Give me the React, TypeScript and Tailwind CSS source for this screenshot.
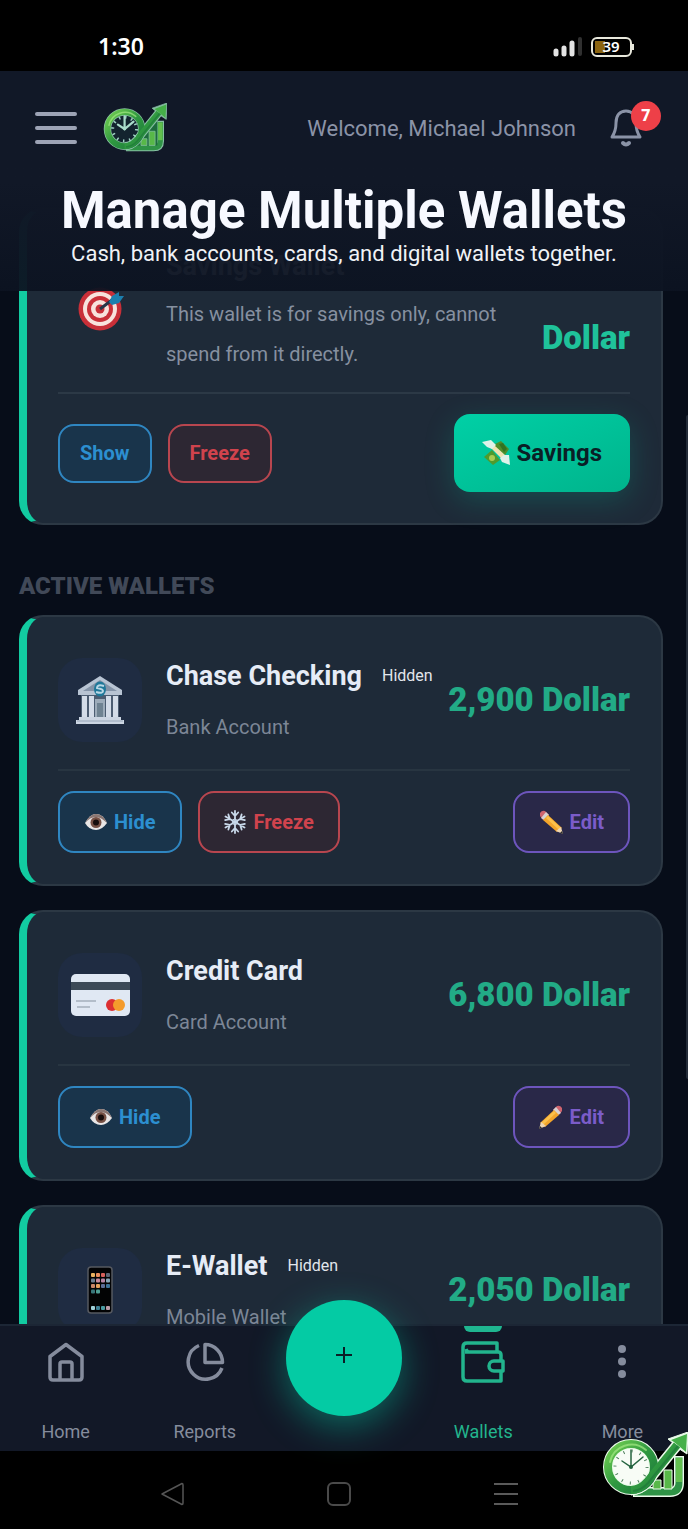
import type { ReactNode } from 'react';
import { clsx } from 'clsx';

type LogoProps = { id: string; className: string; dark?: boolean };

const Logo = ({ id, className, dark }: LogoProps) => {
  const outline = dark ? '#86bfa2' : '#eafbe9';
  return (
    <svg viewBox="0 0 86 66" className={className} aria-hidden="true">
      <defs>
        <linearGradient id={id} x1="0" y1="0" x2="1" y2="1">
          <stop offset="0" stopColor="#74d052" />
          <stop offset="0.5" stopColor="#2f9840" />
          <stop offset="1" stopColor="#1c7a3c" />
        </linearGradient>
      </defs>
      <path d="M36 60H68Q77 60 77 51V29" fill="none" stroke={outline} strokeWidth="10" strokeLinecap="square" strokeLinejoin="round" />
      <path d="M36 60H68Q77 60 77 51V29" fill="none" stroke="#2f9346" strokeWidth="7" strokeLinecap="square" />
      <path d="M77 50V26" stroke="#62bf4e" strokeWidth="6" />
      {dark && <path d="M44 57L73 24V57Z" fill="#1d6b3d" />}
      <path d="M51 57V48h8v9zM62 57V38h8v19z" fill="#58b848" stroke={outline} strokeWidth="1" />
      <circle cx="29" cy="35" r="23" fill={dark ? '#13242f' : '#f8fcf6'} stroke={outline} strokeWidth="10" />
      <path d="M29 58Q38 58 45 50L75 13" fill="none" stroke={outline} strokeWidth="11" />
      <path d="M66 7L86 0L85 22L79 18L71 11Z" fill={outline} stroke={outline} strokeWidth="1" strokeLinejoin="round" />
      <circle cx="29" cy="35" r="23" fill="none" stroke={`url(#${id})`} strokeWidth="8" />
      <path d="M29 58Q38 58 45 50L75 13" fill="none" stroke={`url(#${id})`} strokeWidth="8" />
      <path d="M69 8L85 2L84 20L78 15L72 10Z" fill="#45b048" />
      <path d="M31 59Q40 58 46 51L76 14" fill="none" stroke="#1c7438" strokeWidth="2" opacity="0.6" />
      <path d="M8 30A22 22 0 0 1 44 18" fill="none" stroke="#a4ea84" strokeWidth="2" strokeLinecap="round" opacity="0.7" />
      <circle cx="29" cy="35" r="16" fill="none" stroke={dark ? '#9fd3c4' : '#4d7d5c'} strokeWidth={dark ? 4 : 3} strokeDasharray={dark ? '2 6.4' : '1 7.4'} />
      <path d="M20 29L29 35L41 25M29 35V18" fill="none" stroke={dark ? '#a9dccb' : '#24633f'} strokeWidth={dark ? 3 : 1.5} strokeLinecap="round" />
      <circle cx="29" cy="35" r="2" fill={dark ? '#a9dccb' : '#24633f'} />
    </svg>
  );
};

const TargetIcon = () => (
  <svg viewBox="0 0 48 48" className="size-12" aria-hidden="true">
    <circle cx="24" cy="25" r="21.5" fill="#c92f38" />
    <circle cx="24" cy="25" r="17" fill="#f8e2dc" />
    <circle cx="24" cy="25" r="13" fill="#c92f38" />
    <circle cx="24" cy="25" r="9" fill="#f8e2dc" />
    <circle cx="24" cy="25" r="4.5" fill="#c92f38" />
    <path d="M24 25L36 16" stroke="#26364a" strokeWidth="3" />
    <path d="M33 18L36 12L43 8L43 12L48 12L43 19L36 21Z" fill="#1c7fae" />
  </svg>
);

const BankIcon = () => (
  <svg viewBox="0 0 48 48" className="size-12" aria-hidden="true">
    <path d="M24 0L46 14V19H2V14Z" fill="#b8c4d3" />
    <path d="M24 4L41 15H7Z" fill="#8494a8" />
    <path d="M5 19H43V42H5Z" fill="#4c5d72" />
    <path d="M6 20h5v22H6zM13 20h5v22h-5zM30 20h5v22h-5zM37 20h5v22h-5z" fill="#d3dce8" />
    <path d="M19 23h10v19h-10z" fill="#9dacba" />
    <path d="M21 27h6v15h-6z" fill="#6f8392" />
    <path d="M3 41H45V44H48V48H0V44H3Z" fill="#cbd5e2" />
    <path d="M1 45H47" stroke="#98a6b8" strokeWidth="1" />
    <ellipse cx="24" cy="13" rx="6" ry="7.5" fill="#1f7899" />
    <path d="M28 10Q21 8 21 12Q27 13 27 15Q27 18 20 16" fill="none" stroke="#b9d8e6" strokeWidth="2" />
  </svg>
);

const CardIcon = () => (
  <svg viewBox="0 0 60 44" className="w-15" aria-hidden="true">
    <rect x="1" y="1" width="59" height="42" rx="5" fill="#e0e8f3" />
    <path d="M1 9H60V17H1Z" fill="#3d4a57" />
    <path d="M6 28H26M7 34H20" stroke="#b3bdc9" strokeWidth="2" />
    <circle cx="42" cy="32" r="6" fill="#dc2f32" />
    <circle cx="49" cy="32" r="6" fill="#f49b2c" />
  </svg>
);

const appRows = [
  ['#e9b15f', '#e98d5c', '#d55f5a', '#5b6675'],
  ['#6b7c8f', '#c78a9c', '#b685a5', '#88a7b8'],
  ['#c98667', '#e5a05c', '#5c6d97', '#3b7299'],
  ['#39777a', '#4f9f95'],
];

const PhoneIcon = () => (
  <svg viewBox="0 0 26 48" className="h-12" aria-hidden="true">
    <rect x="1" y="1" width="24" height="46" rx="3" fill="#020304" stroke="#565960" strokeWidth="1.5" />
    {appRows.map((row, y) =>
      row.map((color, x) => <rect key={`${x}-${y}`} x={4 + x * 5} y={7 + y * 5.5} width="4" height="4" rx="1" fill={color} />)
    )}
    {['#9fd0d8', '#3c7f93', '#4a9aa0', '#b99ca7'].map((color, x) => (
      <rect key={x} x={4 + x * 5} y="40" width="4" height="4" rx="1" fill={color} />
    ))}
  </svg>
);

const EyeIcon = () => (
  <svg viewBox="0 0 22 22" className="size-[22px]" aria-hidden="true">
    <path d="M0 12Q5 3 11 3Q18 3 22 12Q17 19 11 19Q4 19 0 12Z" fill="#e9e6e6" />
    <path d="M0 12Q5 3 11 3Q18 3 22 12Q16 6 11 6Q5 6 0 12Z" fill="#8a7672" />
    <circle cx="11" cy="11.5" r="5.5" fill="#765044" />
    <circle cx="11" cy="11.5" r="3" fill="#170d0c" />
  </svg>
);

const SnowIcon = () => (
  <svg viewBox="0 0 22 24" className="w-[22px]" fill="none" stroke="#c9d9ea" strokeWidth="1.8" strokeLinecap="round" aria-hidden="true">
    {[0, 60, 120, 180, 240, 300].map((angle) => (
      <path key={angle} d="M11 12V1M7.8 2.5L11 6L14.2 2.5" transform={`rotate(${angle} 11 12)`} />
    ))}
    <path d="M11 9L13.6 10.500V13.500L11 15L8.400 13.500V10.500Z" strokeWidth="1" />
  </svg>
);

const PencilIcon = ({ flip }: { flip?: boolean }) => (
  <svg viewBox="0 0 24 24" className={clsx('size-6', flip && '-scale-x-100')} aria-hidden="true">
    <path d="M1 3Q3 0 6 1L10 5L4 10L1 6Z" fill="#cf646e" />
    <path d="M7 2L10 5L5 10L2 8Z" fill="#d8d2d2" />
    <path d="M9 5L23 18L18 22L4 10Z" fill="#f3a52b" />
    <path d="M9 6L22 18L20 20L7 8Z" fill="#fbc14c" />
    <path d="M22 17L24 24L17 21Z" fill="#eed6b4" />
    <path d="M23 21L24 24L21 23Z" fill="#2b2b2b" />
  </svg>
);

const MoneyIcon = () => (
  <svg viewBox="0 0 28 26" className="w-7" aria-hidden="true">
    <path d="M11 5L19 1L27 9L23 15Z" fill="#4f8d2a" />
    <path d="M2 17L10 10L18 20L11 25Z" fill="#4f9a2d" />
    <circle cx="10" cy="18" r="3" fill="#a9cc52" />
    <path d="M17 4L21 3L25 9L22 12Z" fill="#327322" />
    <path d="M8 7L12 5L24 16L21 20Z" fill="#f1e2b0" />
    <path d="M0 2L9 0L14 5L10 9L5 7Z" fill="#dff2e9" />
    <path d="M27 15L28 25L20 22L18 18L22 15Z" fill="#dff2e9" />
  </svg>
);

const tones = {
  blue: 'border-[#2f86c1] bg-[#19344b] text-[#2c8fd0]',
  red: 'border-[#b8464f] bg-[#2d2733] text-[#d0434d]',
  purple: 'border-[#6d55bd] bg-[#292848] text-[#7b5cc9]',
};

type ActionProps = { tone: keyof typeof tones; size: string; icon?: ReactNode; children: ReactNode };

const ActionButton = ({ tone, size, icon, children }: ActionProps) => (
  <button type="button" className={clsx('flex items-center justify-center gap-[7px] rounded-2xl border-2 text-xl font-bold', tones[tone], size)}>
    {icon}
    {children}
  </button>
);

type WalletCardProps = {
  icon: ReactNode;
  name: string;
  description: string;
  amount: string;
  hidden?: boolean;
  children: ReactNode;
};

const cardClass =
  'shrink-0 rounded-3xl border-2 border-l-8 border-[#2c3844] border-l-[#12cba1] bg-[#1e2a38] px-[31px] pb-[31px]';

const WalletCard = ({ icon, name, description, amount, hidden, children }: WalletCardProps) => (
  <article className={clsx(cardClass, 'pt-8')}>
    <div className="flex items-center border-b-2 border-[#283541] pb-[18px]">
      <div className="mr-6 flex size-[84px] items-center justify-center rounded-3xl bg-[#1f2c42]">{icon}</div>
      <div>
        <div className="flex items-center gap-5">
          <h3 className="text-[27px] leading-[54px] font-bold text-[#e6ecf6]">{name}</h3>
          {hidden && <span className="text-base text-[#e2e6ec]">Hidden</span>}
        </div>
        <p className="text-xl leading-[48px] text-[#7c8696]">{description}</p>
      </div>
      <p className="ml-auto text-[33px] font-black text-[#22ab86]">{amount}</p>
    </div>
    <div className="flex gap-4 pt-5">{children}</div>
  </article>
);

const StatusBar = () => (
  <div className="flex h-[71px] shrink-0 items-center bg-black pt-[22px] pr-[53px] pl-[98px]">
    <span className="font-['Noto_Sans'] text-[23px] font-semibold text-white">1:30</span>
    <svg viewBox="0 0 82 22" className="ml-auto w-[82px]" aria-hidden="true">
      <path d="M3 18V15M11 18V12M19 18V7" stroke="#e4e4e4" strokeWidth="5" strokeLinecap="round" />
      <path d="M27 18V3" stroke="#303030" strokeWidth="4" strokeLinecap="round" />
      <rect x="39" y="2" width="39" height="18" rx="5" fill="none" stroke="#e8e8dc" strokeWidth="2" />
      <path d="M42 5H52V17H42Z" fill="#8b6410" />
      <path d="M80 8V14" stroke="#e8e8dc" strokeWidth="2" />
      <text x="58" y="16" textAnchor="middle" fill="#fff" fontSize="15" fontWeight="600" fontFamily="Noto Sans">39</text>
    </svg>
  </div>
);

const Header = () => (
  <header className="relative z-10 shrink-0 bg-linear-to-b from-[#111827] from-50% to-[#0c1321]/95 pb-5">
    <div className="flex h-[114px] items-center pr-[27px] pl-[35px]">
      <button type="button" aria-label="Menu" className="flex w-[42px] flex-col gap-[10px]">
        <span className="h-1 rounded-full bg-[#9da3b5]" />
        <span className="h-1 rounded-full bg-[#9da3b5]" />
        <span className="h-1 rounded-full bg-[#9da3b5]" />
      </button>
      <Logo id="logo-header" dark className="ml-[26px] w-16" />
      <span className="ml-auto text-[22px] text-[#8b93a7]">Welcome, Michael Johnson</span>
      <button type="button" aria-label="Notifications" className="relative ml-[34px] pr-[19px]">
        <svg viewBox="0 0 32 38" className="w-8" fill="none" stroke="#8b93a7" strokeWidth="3" strokeLinejoin="round" strokeLinecap="round" aria-hidden="true">
          <path d="M2 28Q6 22 6 14C6 6 10 2 16 2S26 6 26 14Q26 22 30 28Z" />
          <path d="M13 34Q16 37 19 34" strokeWidth="4" />
        </svg>
        <span className="absolute -top-[8px] right-0 flex size-[30px] items-center justify-center rounded-full bg-[#ee4048] text-base font-black text-white">7</span>
      </button>
    </div>
    <h1 className="text-center text-[51px] leading-[52px] font-bold text-[#f7f9ff]">Manage Multiple Wallets</h1>
    <p className="text-center text-[22px] leading-[34px] text-[#f0f2f6]">Cash, bank accounts, cards, and digital wallets together.</p>
  </header>
);

const navLink = 'relative flex flex-col items-center justify-between pt-4 pb-[5px] text-lg';

const BottomNav = () => (
  <nav className="relative z-10 h-[127px] shrink-0 border-t-2 border-[#1c2635] bg-[#121827] text-[#858c9d]">
    <div className="-mx-1 grid h-full grid-cols-5">
      <a href="#home" className={navLink}>
        <svg viewBox="0 0 40 40" className="size-10" fill="none" stroke="currentColor" strokeWidth="3.5" strokeLinejoin="round" aria-hidden="true">
          <path d="M20 2.5L4 14.5V35Q4 38 7 38H33Q36 38 36 35V14.5Z" />
          <path d="M14 38V22Q14 20 16 20H24Q26 20 26 22V38" />
        </svg>
        Home
      </a>
      <a href="#reports" className={navLink}>
        <svg viewBox="0 0 40 40" className="size-10" fill="none" stroke="currentColor" strokeWidth="3.5" aria-hidden="true">
          <path d="M14 3.5A17.5 17.5 0 1 0 37 26" />
          <path d="M20 2.5V20.5H37.5C37.5 11 30 2.5 20 2.5Z" strokeLinejoin="round" />
        </svg>
        Reports
      </a>
      <div className="flex items-start justify-center">
        <button type="button" aria-label="Add" className="-mt-[26px] flex size-[116px] shrink-0 items-center justify-center rounded-full bg-[#04cba4] shadow-[0_10px_36px_rgba(4,203,164,0.45)]">
          <svg viewBox="0 0 18 18" className="-mt-[6px] w-[18px]" stroke="#0b1e26" strokeWidth="2" aria-hidden="true">
            <path d="M9 1V17M1 9H17" />
          </svg>
        </button>
      </div>
      <a href="#wallets" aria-current="page" className={clsx(navLink, 'text-[#22b48d]')}>
        <span className="absolute top-0 h-[6px] w-[38px] rounded-b-md bg-[#1fb690]" />
        <svg viewBox="0 0 44 42" className="-my-px h-[42px] w-11" fill="none" stroke="currentColor" strokeWidth="3.5" strokeLinejoin="round" aria-hidden="true">
          <path d="M36 10V2H6Q2 2 2 6V36Q2 40 6 40H40V30" />
          <path d="M4 11H37Q40 11 40 14V20M5 8Q6 11 8 11" />
          <path d="M42 20H33A5 5 0 0 0 33 30H42Z" />
        </svg>
        Wallets
      </a>
      <a href="#more" className={navLink}>
        <svg viewBox="0 0 10 40" className="h-10" fill="currentColor" aria-hidden="true">
          <circle cx="5" cy="7" r="4" />
          <circle cx="5" cy="19.5" r="4" />
          <circle cx="5" cy="32" r="4" />
        </svg>
        More
      </a>
    </div>
  </nav>
);

const SystemNav = () => (
  <div className="flex h-[78px] shrink-0 items-center justify-between bg-black pt-2 pr-[170px] pl-40">
    <button type="button" aria-label="Back">
      <svg viewBox="0 0 24 24" className="size-6" fill="none" stroke="#555" strokeWidth="1.5" strokeLinejoin="round" aria-hidden="true">
        <path d="M2 12L22 1.5Q23 1.5 23 3V21Q23 22.5 22 22.5Z" />
      </svg>
    </button>
    <button type="button" aria-label="Home screen" className="size-6 rounded-md border-2 border-[#4a4a4a]" />
    <button type="button" aria-label="Recent apps">
      <svg viewBox="0 0 24 24" className="size-6" stroke="#5a5a5a" strokeWidth="2" aria-hidden="true">
        <path d="M0 2H24M0 12H24M0 22H24" />
      </svg>
    </button>
  </div>
);

const App = () => (
  <div className="relative flex h-screen flex-col overflow-hidden bg-[#070d19] font-[Roboto,sans-serif]">
    <StatusBar />
    <Header />
    <main className="relative -mt-[83px] flex min-h-0 flex-1 flex-col overflow-hidden pr-[25px] pl-[19px]">
      <article className={clsx(cardClass, 'pt-7')}>
        <div className="flex items-center border-b-2 border-[#2c3946] pb-[18px]">
          <div className="mr-6 flex w-[84px] shrink-0 justify-center pt-1">
            <TargetIcon />
          </div>
          <div className="max-w-[350px]">
            <h3 className="text-[27px] leading-[56px] font-bold text-[#e6ecf6]">Savings Wallet</h3>
            <p className="text-xl leading-10 text-[#8690a0]">This wallet is for savings only, cannot spend from it directly.</p>
          </div>
          <p className="mt-16 ml-auto text-[33px] font-black text-[#1fc29a]">Dollar</p>
        </div>
        <div className="flex items-center gap-4 pt-5">
          <ActionButton tone="blue" size="h-[59px] px-5">Show</ActionButton>
          <ActionButton tone="red" size="h-[59px] px-5">Freeze</ActionButton>
          <button type="button" className="ml-auto flex h-[78px] items-center gap-[7px] rounded-2xl bg-linear-to-br from-[#00d0a6] to-[#00b48c] px-7 text-2xl font-bold text-[#0a1f26] shadow-[0_8px_30px_rgba(0,200,160,0.22)]">
            <MoneyIcon />
            Savings
          </button>
        </div>
      </article>

      <h2 className="mt-[45px] mb-[13px] text-2xl font-black text-[#414958]">ACTIVE WALLETS</h2>

      <div className="flex flex-col gap-6">
        <WalletCard icon={<BankIcon />} name="Chase Checking" description="Bank Account" amount="2,900 Dollar" hidden>
          <ActionButton tone="blue" size="h-[62px] px-[25px]" icon={<EyeIcon />}>Hide</ActionButton>
          <ActionButton tone="red" size="h-[62px] px-6" icon={<SnowIcon />}>Freeze</ActionButton>
          <ActionButton tone="purple" size="ml-auto h-[62px] px-6" icon={<PencilIcon />}>Edit</ActionButton>
        </WalletCard>
        <WalletCard icon={<CardIcon />} name="Credit Card" description="Card Account" amount="6,800 Dollar">
          <ActionButton tone="blue" size="h-[62px] px-[30px]" icon={<EyeIcon />}>Hide</ActionButton>
          <ActionButton tone="purple" size="ml-auto h-[62px] px-6" icon={<PencilIcon flip />}>Edit</ActionButton>
        </WalletCard>
        <WalletCard icon={<PhoneIcon />} name="E-Wallet" description="Mobile Wallet" amount="2,050 Dollar" hidden>
          <ActionButton tone="blue" size="h-[62px] px-[25px]" icon={<EyeIcon />}>Hide</ActionButton>
          <ActionButton tone="purple" size="ml-auto h-[62px] px-6" icon={<PencilIcon />}>Edit</ActionButton>
        </WalletCard>
      </div>

      <div className="absolute top-[207px] right-0 h-[664px] w-[2px] rounded-l-full bg-[#232b38]" />
    </main>
    <BottomNav />
    <SystemNav />
    <Logo id="logo-corner" className="absolute right-0 bottom-[31px] z-20 w-[86px]" />
  </div>
);

export default App;
